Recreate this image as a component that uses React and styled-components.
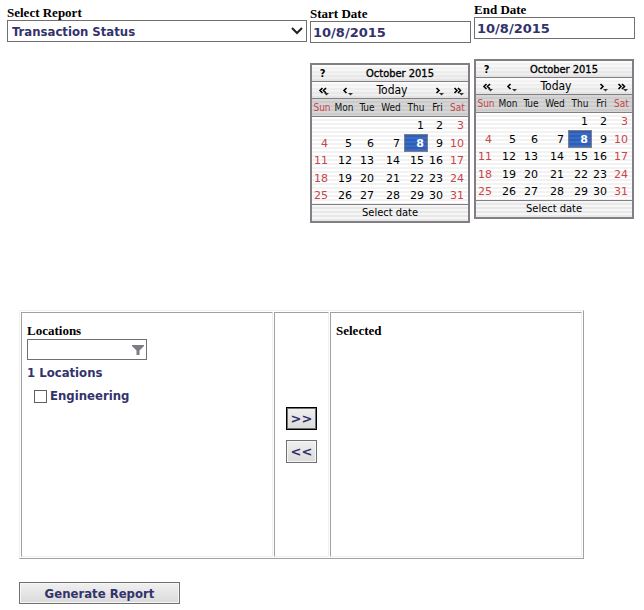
import React, { useState } from 'react';
import styled, { createGlobalStyle, css } from 'styled-components';

const DAY_NAMES = ['Sun', 'Mon', 'Tue', 'Wed', 'Thu', 'Fri', 'Sat'];

const WEEKS = [
  [null, null, null, null, 1, 2, 3],
  [4, 5, 6, 7, 8, 9, 10],
  [11, 12, 13, 14, 15, 16, 17],
  [18, 19, 20, 21, 22, 23, 24],
  [25, 26, 27, 28, 29, 30, 31],
];

const isWeekend = index => index === 0 || index === 6;

// chevrons, each with the small drop-down mark at its lower right
const NAV_SHAPES = {
  prevYear: {
    chevrons: 'M6.5 4 L4 6.5 L6.5 9 M10 4 L7.5 6.5 L10 9',
    mark: 'M8 9h5l-2.5 2.5z',
  },
  prevMonth: {
    chevrons: 'M6.5 4 L4 6.5 L6.5 9',
    mark: 'M8 9h5l-2.5 2.5z',
  },
  nextMonth: {
    chevrons: 'M8.5 4 L11 6.5 L8.5 9',
    mark: 'M11 9h5l-2.5 2.5z',
  },
  nextYear: {
    chevrons: 'M4.5 4 L7 6.5 L4.5 9 M8 4 L10.5 6.5 L8 9',
    mark: 'M9 9h5l-2.5 2.5z',
  },
};

const NavIcon = ({ kind }) => (
  <svg width="16" height="12" viewBox="0 0 16 12" aria-hidden="true">
    <path
      d={NAV_SHAPES[kind].chevrons}
      fill="none"
      stroke="#000"
      strokeWidth="1.6"
    />
    <path d={NAV_SHAPES[kind].mark} fill="#333" />
  </svg>
);

const Calendar = () => {
  const [selected, setSelected] = useState(8);

  return (
    <CalendarFrame>
      <CalendarTitle>
        <HelpButton type="button">?</HelpButton>
        <MonthName>October 2015</MonthName>
      </CalendarTitle>
      <CalendarNav>
        <NavButton type="button" aria-label="Previous year">
          <NavIcon kind="prevYear" />
        </NavButton>
        <NavButton type="button" aria-label="Previous month">
          <NavIcon kind="prevMonth" />
        </NavButton>
        <NavButton type="button">Today</NavButton>
        <NavButton type="button" aria-label="Next month">
          <NavIcon kind="nextMonth" />
        </NavButton>
        <NavButton type="button" aria-label="Next year">
          <NavIcon kind="nextYear" />
        </NavButton>
      </CalendarNav>
      <DayTable>
        <colgroup>
          <col width="20" />
          <col width="24" />
          <col width="22" />
          <col width="26" />
          <col width="24" />
          <col width="19" />
          <col width="21" />
        </colgroup>
        <thead>
          <tr>
            {DAY_NAMES.map((name, i) => (
              <DayName key={name} $weekend={isWeekend(i)}>
                {name}
              </DayName>
            ))}
          </tr>
        </thead>
        <tbody>
          {WEEKS.map((week, w) => (
            <tr key={w}>
              {week.map((day, i) => (
                <DayCell
                  key={i}
                  $weekend={isWeekend(i)}
                  $selected={day !== null && day === selected}
                  onClick={() => day && setSelected(day)}
                >
                  {day}
                </DayCell>
              ))}
            </tr>
          ))}
        </tbody>
      </DayTable>
      <CalendarFooter>Select date</CalendarFooter>
    </CalendarFrame>
  );
};

const App = () => (
  <Page>
    <GlobalStyle />
    <FilterRow>
      <ReportColumn>
        <Label htmlFor="report">Select Report</Label>
        <SelectWrap>
          <ReportSelect id="report" defaultValue="Transaction Status">
            <option>Transaction Status</option>
          </ReportSelect>
          <SelectArrow width="14" height="10" viewBox="0 0 14 10">
            <path d="M2 2 L7 7 L12 2" fill="none" stroke="#222" strokeWidth="2" />
          </SelectArrow>
        </SelectWrap>
      </ReportColumn>
      <DateColumn>
        <Label htmlFor="start">Start Date</Label>
        <DateInput id="start" type="text" defaultValue="10/8/2015" />
        <Calendar />
      </DateColumn>
      <DateColumn $raised>
        <Label htmlFor="end">End Date</Label>
        <DateInput id="end" type="text" defaultValue="10/8/2015" />
        <Calendar />
      </DateColumn>
    </FilterRow>

    <Picker>
      <PickerPane>
        <Label htmlFor="locations">Locations</Label>
        <SearchWrap>
          <SearchInput id="locations" type="text" />
          <FunnelIcon width="14" height="12" viewBox="0 0 14 12">
            <path d="M1 1h12v1L8.5 6.5V11h-3V6.5L1 2z" fill="#7b7e82" />
          </FunnelIcon>
        </SearchWrap>
        <Count>1 Locations</Count>
        <CheckRow>
          <Checkbox type="checkbox" />
          Engineering
        </CheckRow>
      </PickerPane>
      <MovePane>
        <MoveButton type="button" $primary>
          &gt;&gt;
        </MoveButton>
        <MoveButton type="button">&lt;&lt;</MoveButton>
      </MovePane>
      <PickerPane>
        <Label as="h2">Selected</Label>
      </PickerPane>
    </Picker>

    <GenerateButton type="button">Generate Report</GenerateButton>
  </Page>
);

export default App;

const sans = `'DejaVu Sans Condensed', 'DejaVu Sans', Tahoma, sans-serif`;
const wideSans = `'DejaVu Sans', Verdana, sans-serif`;

const GlobalStyle = createGlobalStyle`
  * {
    box-sizing: border-box;
  }

  body {
    margin: 0;
    background: #fff;
    color: #000;
  }
`;

const boldText = css`
  font-family: ${sans};
  font-size: 13px;
  font-weight: bold;
  color: #33336b;
`;

const Page = styled.main`
  padding: 2px 9px 6px 7px;
`;

const FilterRow = styled.div`
  display: flex;
  align-items: flex-start;
  gap: 3px;
`;

const ReportColumn = styled.div`
  flex: 1;
  padding-top: 3px;
`;

const DateColumn = styled.div`
  width: 161px;
  padding-top: ${props => (props.$raised ? '0' : '4px')};
`;

const Label = styled.label`
  display: block;
  margin: 0;
  font-family: 'Liberation Serif', 'Times New Roman', serif;
  font-size: 13px;
  font-weight: bold;
  line-height: 15px;
`;

const SelectWrap = styled.div`
  position: relative;
`;

const ReportSelect = styled.select`
  ${boldText}
  appearance: none;
  display: block;
  width: 100%;
  height: 22px;
  padding: 0 20px 0 4px;
  border: 1px solid #707070;
  border-radius: 0;
  background: #fff;
`;

const SelectArrow = styled.svg`
  position: absolute;
  top: 6px;
  right: 3px;
  pointer-events: none;
`;

const DateInput = styled.input`
  ${boldText}
  display: block;
  width: 100%;
  height: 22px;
  padding: 0 2px;
  border: 1px solid #707070;
  font-family: ${wideSans};
`;

const CalendarFrame = styled.div`
  width: 160px;
  margin-top: 20px;
  border: 2px solid #837d86;
  background: repeating-linear-gradient(#fff 0 2px, #f2f2f2 2px 4px);
  font-family: ${sans};
  font-size: 11px;
`;

const bar = css`
  display: flex;
  align-items: center;
  height: 17px;
  border-bottom: 1px solid #837d86;
  background:
    linear-gradient(rgba(255, 255, 255, 0.5), rgba(210, 210, 210, 0.4)),
    repeating-linear-gradient(#fbfbfb 0 2px, #ededed 2px 4px);
`;

const CalendarTitle = styled.div`
  ${bar}
`;

const plainButton = css`
  padding: 0;
  border: 0;
  background: none;
  color: #000;
  font: inherit;
`;

const HelpButton = styled.button`
  ${plainButton}
  width: 21px;
  font-weight: bold;
`;

const MonthName = styled.span`
  flex: 1;
  padding-right: 1px;
  text-align: center;
  -webkit-text-stroke: 0.3px #000;
`;

const CalendarNav = styled.div`
  ${bar}
  display: grid;
  grid-template-columns: 24px 24px 1fr 24px 20px;
`;

const NavButton = styled.button`
  ${plainButton}
  display: flex;
  justify-content: center;
  font-size: 12px;
`;

const DayTable = styled.table`
  width: 100%;
  table-layout: fixed;
  border-collapse: separate;
  border-spacing: 0;
`;

const DayName = styled.th`
  height: 18px;
  padding: 0;
  border-bottom: 1px solid #837d86;
  background: repeating-linear-gradient(#d6d6d6 0 2px, #cbcbcb 2px 4px);
  color: ${props => (props.$weekend ? '#c8454a' : '#111')};
  font-size: 10px;
  font-weight: normal;
  text-align: center;
`;

const DayCell = styled.td`
  height: 17px;
  padding: 0 4px 0 0;
  color: ${props => (props.$weekend ? '#c8454a' : '#000')};
  font-family: ${wideSans};
  font-size: 11px;
  line-height: 15px;
  text-align: right;
  cursor: pointer;

  tr:nth-child(even) > & {
    height: 18px;
  }

  ${props =>
    props.$selected &&
    css`
      padding-right: 3px;
      border: 1px solid #837d86;
      background: repeating-linear-gradient(#2d5fb8 0 2px, #3a6cc6 2px 4px);
      color: #fff;
      font-weight: bold;
    `}
`;

const CalendarFooter = styled.div`
  border-top: 1px solid #837d86;
  background: repeating-linear-gradient(#f6f6f6 0 2px, #e8e8e8 2px 4px);
  line-height: 16px;
  text-align: center;
`;

const Picker = styled.section`
  display: grid;
  grid-template-columns: 1fr 55px 1fr;
  gap: 1px;
  min-height: 249px;
  margin: 87px 51px 0 12px;
  padding: 1px;
  border: 1px solid;
  border-color: #f0f0f0 #a0a0a0 #a0a0a0 #f0f0f0;
`;

const paneBorder = css`
  border: 1px solid;
  border-color: #a0a0a0 #f0f0f0 #f0f0f0 #a0a0a0;
`;

const PickerPane = styled.div`
  ${paneBorder}
  padding: 10px 5px;
`;

const SearchWrap = styled.div`
  position: relative;
  width: 120px;
  margin-top: 1px;
`;

const SearchInput = styled.input`
  ${boldText}
  display: block;
  width: 100%;
  height: 21px;
  padding: 0 20px 0 2px;
  border: 1px solid #707070;
`;

const FunnelIcon = styled.svg`
  position: absolute;
  top: 5px;
  right: 2px;
`;

const Count = styled.div`
  ${boldText}
  margin-top: 4px;
  line-height: 18px;
`;

const CheckRow = styled.label`
  ${boldText}
  display: flex;
  align-items: center;
  gap: 3px;
  margin-top: 5px;
  padding-left: 7px;
  line-height: 18px;
`;

const Checkbox = styled.input`
  appearance: none;
  width: 13px;
  height: 13px;
  margin: 0;
  border: 1px solid #606060;
  background: #fff;

  &:checked {
    background: #33336b;
  }
`;

const MovePane = styled.div`
  ${paneBorder}
  display: flex;
  flex-direction: column;
  align-items: center;
  gap: 10px;
  padding-top: 94px;
`;

const raisedButton = css`
  ${boldText}
  padding: 0;
  border: 1px solid #707070;
  background: linear-gradient(#f0f0f0, #dadada);
  box-shadow: inset 0 0 0 1px #f6f6f6;
`;

const MoveButton = styled.button`
  ${raisedButton}
  width: 31px;
  height: 23px;
  font-family: ${wideSans};

  ${props =>
    props.$primary &&
    css`
      border-color: #000;
      box-shadow: inset 0 0 0 1px #707070;
    `}
`;

const GenerateButton = styled.button`
  ${raisedButton}
  display: block;
  width: 161px;
  height: 22px;
  margin: 23px 0 0 12px;
`;
